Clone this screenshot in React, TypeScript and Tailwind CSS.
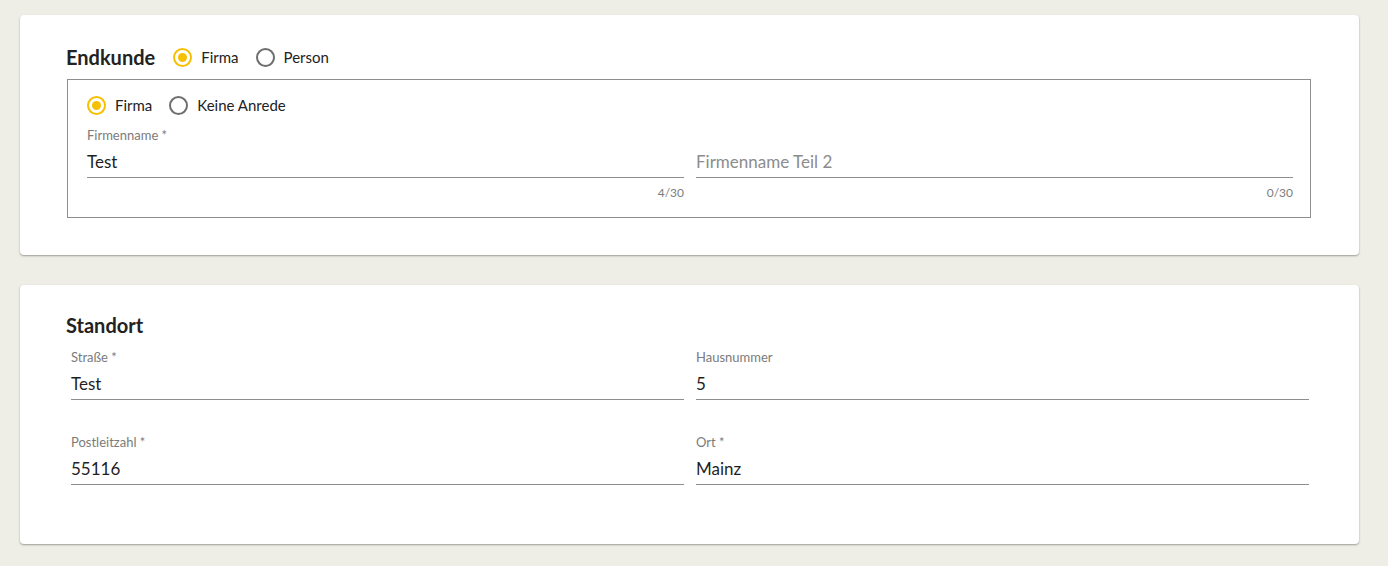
const font = { fontFamily: "Lato, 'Noto Sans', sans-serif" };

function Radio({ label, checked }: { label: string; checked?: boolean }) {
  return (
    <label className="flex items-center gap-[9px] text-[15px] text-[#222]">
      <span
        className={
          checked
            ? "flex h-[19px] w-[19px] items-center justify-center rounded-full border-2 border-[#f5c000]"
            : "flex h-[19px] w-[19px] items-center justify-center rounded-full border-2 border-[#6e6e6e]"
        }
      >
        {checked && <span className="h-[9px] w-[9px] rounded-full bg-[#f5c000]" />}
      </span>
      {label}
    </label>
  );
}

function Field({
  label,
  value,
  placeholder,
  counter,
}: {
  label?: string;
  value?: string;
  placeholder?: string;
  counter?: string;
}) {
  return (
    <div className="flex flex-col">
      <div className="h-4 text-[13px] leading-4 text-[#7b7b7b]">{label}</div>
      <div className="h-[35px] border-b border-[#8e8e8e] pt-[9px] text-[17px] leading-5">
        {value ? (
          <span className="text-[#1f1f1f]">{value}</span>
        ) : (
          <span className="text-[#8c8c8c]">{placeholder}</span>
        )}
      </div>
      {counter && (
        <div className="mt-[7px] h-4 text-right text-[12px] leading-4 text-[#7d7d7d]">{counter}</div>
      )}
    </div>
  );
}

export default function App() {
  return (
    <div className="min-h-[566px] bg-[#eeede6] px-[20px] pt-[15px] pb-[22px]" style={font}>
      {/* Endkunde */}
      <div className="w-[1339px] rounded bg-white pl-[46px] pr-[48px] pt-[30px] pb-[37px] shadow-[0_1px_2px_rgba(0,0,0,0.35)]">
        <div className="flex h-6 items-center gap-[17px]">
          <h2 className="mr-[1px] text-[20px] font-bold text-[#222]">Endkunde</h2>
          <div className="flex items-center gap-[17px]">
            <Radio label="Firma" checked />
            <Radio label="Person" />
          </div>
        </div>

        <div className="mt-[10px] ml-[1px] border border-[#8e8e8e] pl-[19px] pr-[17px] pt-[13px] pb-4">
          <div className="flex h-6 items-center gap-[17px]">
            <Radio label="Firma" checked />
            <Radio label="Keine Anrede" />
          </div>
          <div className="mt-[10px] grid grid-cols-2 gap-3">
            <Field label="Firmenname *" value="Test" counter="4/30" />
            <Field placeholder="Firmenname Teil 2" counter="0/30" />
          </div>
        </div>
      </div>

      {/* Standort */}
      <div className="mt-[30px] w-[1339px] rounded bg-white pl-[51px] pr-[50px] pt-[28px] pb-[59px] shadow-[0_1px_2px_rgba(0,0,0,0.35)]">
        <h2 className="-ml-[5px] h-6 text-[20px] font-bold leading-6 text-[#222]">Standort</h2>
        <div className="mt-[12px] grid grid-cols-2 gap-x-3 gap-y-[34px]">
          <Field label="Straße *" value="Test" />
          <Field label="Hausnummer" value="5" />
          <Field label="Postleitzahl *" value="55116" />
          <Field label="Ort *" value="Mainz" />
        </div>
      </div>
    </div>
  );
}
